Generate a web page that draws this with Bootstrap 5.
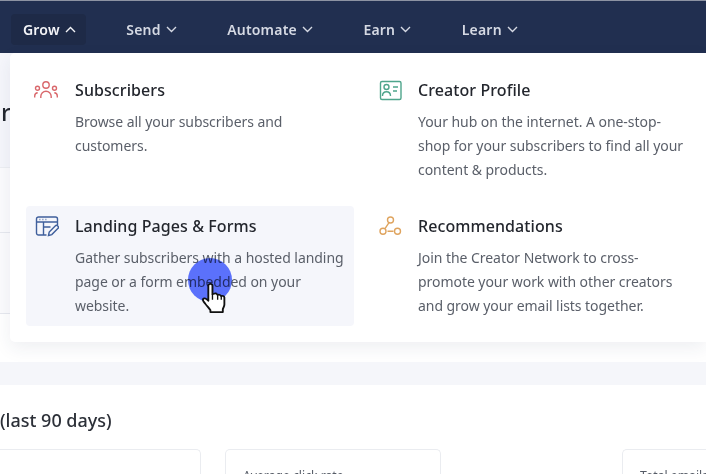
<!doctype html>
<html lang="en">
<head>
<meta charset="utf-8">
<meta name="viewport" content="width=device-width, initial-scale=1">
<title>Grow menu</title>
<link href="https://cdn.jsdelivr.net/npm/bootstrap@5.3.0/dist/css/bootstrap.min.css" rel="stylesheet">
<style>
  html, body { height: 474px; overflow: hidden; }
  body { font-family: "Noto Sans", "Open Sans", sans-serif; background: #fff; position: relative; }
  .top-bar { height: 53px; background: #212f50; border-top: 1px solid #8d93a3; padding: 5px 0 0 11px; gap: 28.5px; }
  .top-link { height: 31px; padding: 0 10px 0 12px; color: #d5d9e3; font-size: 14px; font-weight: 600; letter-spacing: .2px; border-radius: 4px; gap: 5px; text-decoration: none; }
  .top-link.is-open { background: #1e2a47; color: #f4f5f8; }
  .top-link svg { width: 11px; height: 7px; fill: none; stroke: currentColor; stroke-width: 1.4; }
  .page-head { height: 115px; background: #f5f6fb; font-size: 24px; font-weight: 500; color: #22262e; padding: 41px 0 0 1px; line-height: 36px; border-bottom: 1px solid #eceef2; }
  .page-row { height: 65px; background: #fbfbfd; border-bottom: 1px solid #e6e8ee; }
  .page-row + .page-row { height: 81px; }
  .band { height: 23px; margin-top: 48px; background: #f5f6fa; }
  .period { margin: 24px 0 0; font-size: 18px; line-height: 22px; font-weight: 500; color: #2c3038; }
  .stat-row { margin-top: 18px; height: 40px; gap: 24px; }
  .stat-box { border: 1px solid #eaecf0; border-bottom: 0; border-radius: 5px 5px 0 0; font-size: 12.2px; color: #555b66; padding: 17px 0 0 17px; white-space: nowrap; overflow: hidden; flex: none; }
  .stat-a { width: 201px; border-left: 0; border-top-left-radius: 0; }
  .stat-b { width: 216px; }
  .stat-c { width: 84px; margin-left: 157px; border-right: 0; border-top-right-radius: 0; }
  .grow-panel { position: absolute; left: 10px; right: 0; top: 53px; height: 289px; padding: 17px 0 0 16px; background: #fff; border-radius: 5px 0 0 5px; box-shadow: 0 6px 18px rgba(40, 50, 90, .08); display: grid; grid-template-columns: 328px 328px; grid-auto-rows: 120px; column-gap: 16px; row-gap: 16px; }
  .grow-item { display: flex; padding: 8px; border-radius: 4px; }
  .grow-item.is-hover { background: #f5f6fb; }
  .grow-icon { flex: none; width: 41px; }
  .grow-icon svg { display: block; fill: none; stroke-width: 1.4; }
  .col-right .grow-icon { width: 40px; }
  .grow-title { font-size: 16px; line-height: 24px; font-weight: 500; letter-spacing: .08px; color: #23262d; margin: 0 0 8px; }
  .grow-desc { font-size: 14px; line-height: 24px; letter-spacing: -.05px; color: #5a5f69; margin: 0; }
  .pointer-dot { position: absolute; left: 188px; top: 258px; width: 44px; height: 44px; border-radius: 50%; background: #566eff; opacity: .95; mix-blend-mode: multiply; }
  .pointer-hand { position: absolute; left: 199px; top: 281px; width: 29px; height: 33px; }
</style>
</head>
<body>
  <nav class="top-bar d-flex align-items-center">
    <a class="top-link is-open d-flex align-items-center" href="#">Grow <svg viewBox="0 0 11 7"><path d="M1 6l4.500-4.500L10 6"/></svg></a>
    <a class="top-link d-flex align-items-center" href="#">Send <svg viewBox="0 0 11 7"><path d="M1 1l4.500 4.500L10 1"/></svg></a>
    <a class="top-link d-flex align-items-center" href="#">Automate <svg viewBox="0 0 11 7"><path d="M1 1l4.500 4.500L10 1"/></svg></a>
    <a class="top-link d-flex align-items-center" href="#">Earn <svg viewBox="0 0 11 7"><path d="M1 1l4.500 4.500L10 1"/></svg></a>
    <a class="top-link d-flex align-items-center" href="#">Learn <svg viewBox="0 0 11 7"><path d="M1 1l4.500 4.500L10 1"/></svg></a>
  </nav>

  <div class="page-head">r</div>
  <div class="page-row"></div>
  <div class="page-row"></div>
  <div class="band"></div>
  <h2 class="period">(last 90 days)</h2>
  <div class="stat-row d-flex">
    <div class="stat-box stat-a"></div>
    <div class="stat-box stat-b">Average click rate</div>
    <div class="stat-box stat-c">Total emails</div>
  </div>

  <div class="grow-panel">
    <div class="grow-item">
      <div class="grow-icon">
        <svg width="24" height="22" viewBox="0 0 24 22" stroke="#d9686c">
          <circle cx="12" cy="7" r="3.200"/><circle cx="3.500" cy="10.300" r="2"/><circle cx="20.500" cy="10.300" r="2"/>
          <path d="M6.800 20v-1.500a5.200 5.200 0 0 1 10.400 0V20M.7 19.500v-1.500a3.300 3.300 0 0 1 3-3.300M23.300 19.500v-1.500a3.300 3.300 0 0 0-3-3.300"/>
        </svg>
      </div>
      <div>
        <h3 class="grow-title">Subscribers</h3>
        <p class="grow-desc">Browse all your subscribers and customers.</p>
      </div>
    </div>
    <div class="grow-item col-right">
      <div class="grow-icon">
        <svg width="25" height="24" viewBox="0 0 25 24" stroke="#4fa58c">
          <rect x="2.500" y="3.500" width="20.500" height="18" rx="1.500"/><circle cx="8.500" cy="9" r="2.500"/>
          <path d="M4.500 18c0-2.700 1.500-4.300 4-4.300s4 1.600 4 4.300M15 9h5M15 13h4"/>
        </svg>
      </div>
      <div>
        <h3 class="grow-title">Creator Profile</h3>
        <p class="grow-desc">Your hub on the internet. A one-stop-shop for your subscribers to find all your content &amp; products.</p>
      </div>
    </div>
    <div class="grow-item is-hover">
      <div class="grow-icon">
        <svg width="25" height="24" viewBox="-1.500 -2 25 24" stroke="#3f5f9c">
          <path d="M11 19H3a2 2 0 0 1-2-2V3a2 2 0 0 1 2-2h17a2 2 0 0 1 2 2v6M1 6h21M8 6v13M8 11h7"/>
          <path d="M4 3.500h.8M7 3.500h.8M10 3.500h.8"/>
          <path d="M13 19.500l.7-3.500 6-6a1.700 1.700 0 0 1 2.600 2.600l-6 6z"/>
        </svg>
      </div>
      <div>
        <h3 class="grow-title">Landing Pages &amp; Forms</h3>
        <p class="grow-desc">Gather subscribers with a hosted landing page or a form embedded on your website.</p>
      </div>
    </div>
    <div class="grow-item col-right">
      <div class="grow-icon">
        <svg width="25" height="24" viewBox="0 0 25 24" stroke="#dfa45f">
          <circle cx="12.500" cy="6" r="3"/><circle cx="5" cy="17.300" r="3"/><circle cx="19.500" cy="17.300" r="3"/>
          <path d="M11 8.700l-4 6M9.500 17.300h6"/>
        </svg>
      </div>
      <div>
        <h3 class="grow-title">Recommendations</h3>
        <p class="grow-desc">Join the Creator Network to cross-promote your work with other creators and grow your email lists together.</p>
      </div>
    </div>
  </div>

  <div class="pointer-dot"></div>
  <svg class="pointer-hand" viewBox="0 0 28 35" preserveAspectRatio="none">
    <path d="M9 19V5a2 2 0 0 1 4 0v9l1.500-.5a2 2 0 0 1 3 .8l.5.6a2 2 0 0 1 3 .7l.5.5a2 2 0 0 1 3 1.400V25c0 2-1 3-1.500 5v3H11v-2c-1-2-3-4-5-7-1.500-2-3-3.500-2-5 1-1.200 3-.5 5 2z" fill="#fff" stroke="#111" stroke-width="1.800" stroke-linejoin="round"/>
    <path d="M13 14v6M18 15v5M21.500 16v4" stroke="#111" stroke-width="1.300" fill="none"/>
  </svg>

  <script src="https://cdn.jsdelivr.net/npm/bootstrap@5.3.0/dist/js/bootstrap.bundle.min.js"></script>
</body>
</html>
